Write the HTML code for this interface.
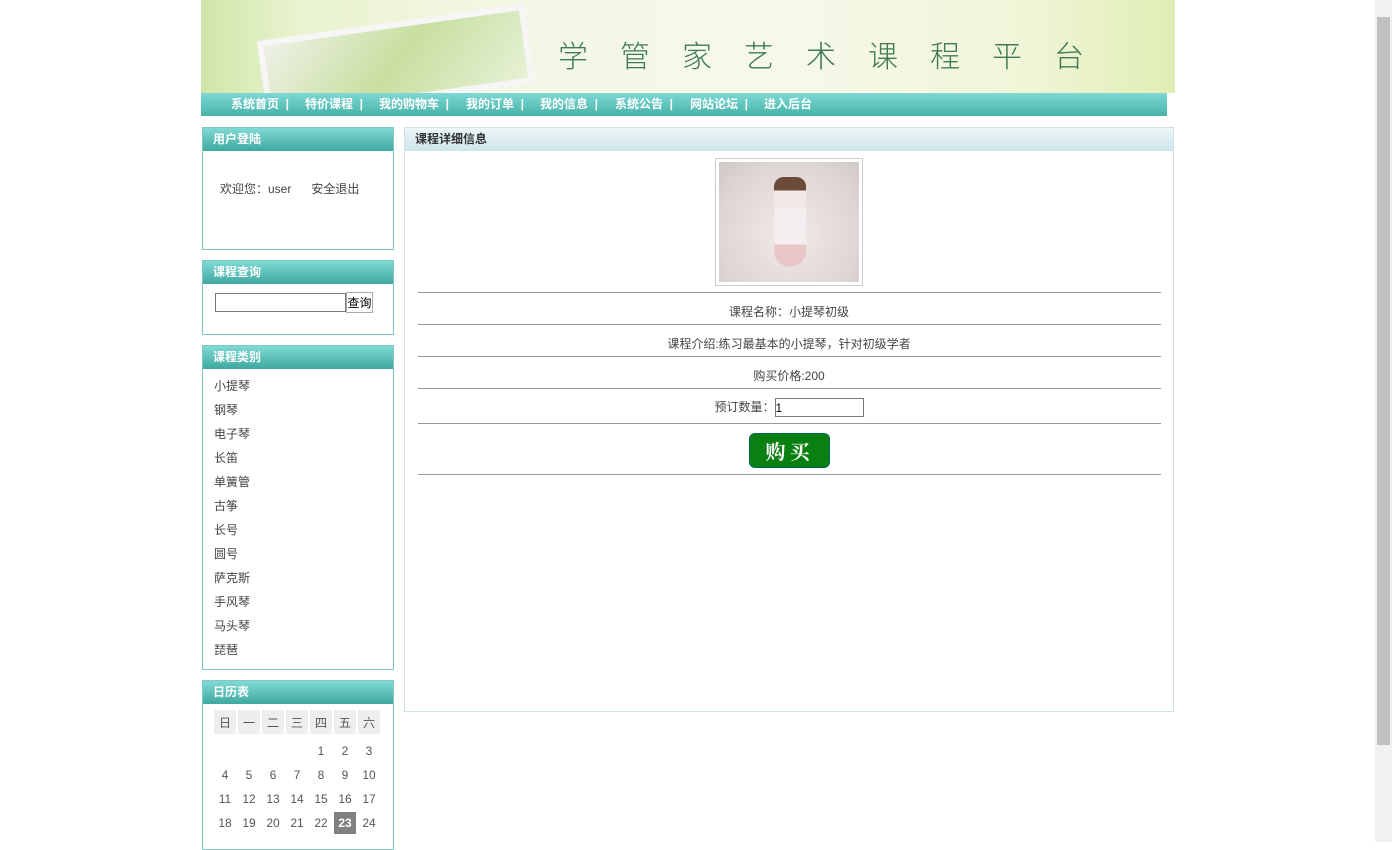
<!DOCTYPE html>
<html><head><meta charset="utf-8"><style>
*{margin:0;padding:0;box-sizing:border-box}
body{width:1392px;height:842px;overflow:hidden;background:#fff;font-family:"Liberation Sans","Noto Sans CJK SC",sans-serif;font-size:12px;color:#444;position:relative}
.sb{position:absolute;right:0;top:0;width:17px;height:842px;background:#f1f1f1}
.sb div{position:absolute;left:2px;top:17px;width:13px;height:728px;background:#c1c1c1}
.banner{position:absolute;left:201px;top:0;width:974px;height:93px;background:linear-gradient(90deg,#cfe6a8 0%,#e9f3cf 10%,#f4f7e4 30%,#f7f8ea 60%,#f1f5d7 85%,#dfeeb4 100%);overflow:hidden}
.title{position:absolute;left:357px;top:32px;font-size:30px;letter-spacing:32px;color:#3e7a56;font-family:"Noto Sans CJK SC",sans-serif;font-weight:300}
.frame{position:absolute;left:60px;top:22px;width:270px;height:80px;background:linear-gradient(135deg,#eef1e7,#c8dfa0 50%,#e7f1d6);border:6px solid #f6f6f6;transform:rotate(-8deg)}
.nav{position:absolute;left:201px;top:93px;width:966px;height:23px;background:linear-gradient(#7fd8d4,#45b2a8);color:#fff;font-size:12px;line-height:23px}
.nav span{position:absolute;top:0;font-weight:bold}
.box{position:absolute;left:202px;width:192px;border:1px solid #7ec8c2}
.bh{height:23px;background:linear-gradient(#80dad5,#3ea99f);color:#fff;font-weight:bold;padding-left:10px;line-height:23px}
.l div{height:24px;line-height:24px;padding-left:11px}
.main{position:absolute;left:404px;top:127px;width:770px;height:585px;border:1px solid #cfe0e6}
.mh{height:23px;background:linear-gradient(#eef6f8,#cde5ec);font-weight:bold;color:#333;padding-left:10px;line-height:23px}
.hr{position:absolute;left:13px;width:743px;border-top:1px solid #999}
.c{position:absolute;left:0;width:768px;text-align:center}
table{border-collapse:separate;border-spacing:2px;position:absolute;left:9px;top:27px}
td{width:22px;height:22px;text-align:center;font-size:12px;color:#555}
th{width:22px;height:24px;background:#eee;font-weight:normal;color:#555}
tr.f td{padding-top:4px;height:26px}
</style></head><body>
<div class="banner"><div class="frame"></div><div class="title">学管家艺术课程平台</div></div>
<div class="nav"><span style="left:30px">系统首页 &nbsp;|</span><span style="left:104px">特价课程 &nbsp;|</span><span style="left:178px">我的购物车 &nbsp;|</span><span style="left:265px">我的订单 &nbsp;|</span><span style="left:339px">我的信息 &nbsp;|</span><span style="left:414px">系统公告 &nbsp;|</span><span style="left:489px">网站论坛 &nbsp;|</span><span style="left:563px">进入后台</span></div>
<div class="box" style="top:127px;height:123px"><div class="bh">用户登陆</div><div style="padding:29px 0 0 17px">欢迎您：user &nbsp;&nbsp;&nbsp;&nbsp; 安全退出</div></div>
<div class="box" style="top:260px;height:75px"><div class="bh">课程查询</div><div style="padding:8px 0 0 12px"><input style="width:131px;height:19px;border:1px solid #777;vertical-align:middle"><button style="height:21px;width:27px;font-size:12px;border:1px solid #aaa;background:#fff;vertical-align:middle">查询</button></div></div>
<div class="box" style="top:345px;height:325px"><div class="bh">课程类别</div><div class="l" style="padding-top:5px"><div>小提琴</div><div>钢琴</div><div>电子琴</div><div>长笛</div><div>单簧管</div><div>古筝</div><div>长号</div><div>圆号</div><div>萨克斯</div><div>手风琴</div><div>马头琴</div><div>琵琶</div></div></div>
<div class="box" style="top:680px;height:170px"><div class="bh">日历表</div>
<table><tr><th>日</th><th>一</th><th>二</th><th>三</th><th>四</th><th>五</th><th>六</th></tr>
<tr class="f"><td></td><td></td><td></td><td></td><td>1</td><td>2</td><td>3</td></tr>
<tr><td>4</td><td>5</td><td>6</td><td>7</td><td>8</td><td>9</td><td>10</td></tr>
<tr><td>11</td><td>12</td><td>13</td><td>14</td><td>15</td><td>16</td><td>17</td></tr>
<tr><td>18</td><td>19</td><td>20</td><td>21</td><td>22</td><td style="background:#808080;color:#fff;font-weight:bold">23</td><td>24</td></tr></table></div>
<div class="main"><div class="mh">课程详细信息</div>
<div style="position:absolute;left:310px;top:30px;width:148px;height:128px;border:1px solid #ccc;padding:3px"><div style="width:140px;height:120px;background:radial-gradient(ellipse at 50% 60%,#f3eaea,#ddd6d4 70%,#cfc8c6)"><div style="position:relative;left:55px;top:15px;width:32px;height:90px;background:linear-gradient(#6b4a3a 0 15%,#f2e8e6 15% 35%,#f5eeee 35% 75%,#e9c7c9 75%);border-radius:12px 12px 20px 20px"></div></div></div>
<div class="hr" style="top:164px"></div>
<div class="c" style="top:175px">课程名称：小提琴初级</div>
<div class="hr" style="top:196px"></div>
<div class="c" style="top:207px">课程介绍:练习最基本的小提琴，针对初级学者</div>
<div class="hr" style="top:228px"></div>
<div class="c" style="top:239px">购买价格:200</div>
<div class="hr" style="top:260px"></div>
<div class="c" style="top:270px">预订数量：<input value="1" style="width:89px;height:19px;border:1px solid #777;font-size:12px;vertical-align:middle"></div>
<div class="hr" style="top:295px"></div>
<div style="position:absolute;left:344px;top:305px;width:81px;height:35px;background:#0a7f12;border:1px solid #065;border-radius:6px;color:#fff;font-size:20px;font-weight:bold;text-align:center;line-height:33px;letter-spacing:4px;font-family:'Noto Serif CJK SC',serif">购买</div>
<div class="hr" style="top:346px"></div>
</div>
<div class="sb"><div></div></div>
</body></html>
